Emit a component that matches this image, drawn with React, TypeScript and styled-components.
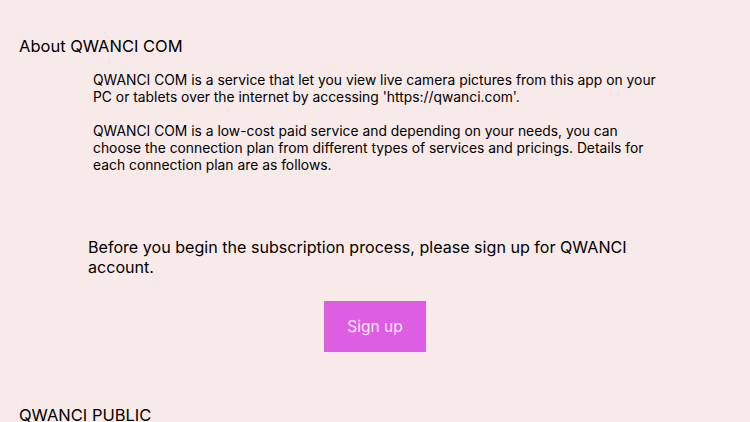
import styled, { createGlobalStyle } from "styled-components";

const GlobalStyle = createGlobalStyle`
  html, body {
    margin: 0;
    padding: 0;
    background: #f9eaea;
  }
  body {
    font-family: Inter, "Liberation Sans", sans-serif;
    color: #000;
  }
`;

function App() {
  return (
    <Page>
      <GlobalStyle />
      <SectionTitle>About QWANCI COM</SectionTitle>
      <Description>
        <Paragraph>
          QWANCI COM is a service that let you view live camera pictures from
          this app on your PC or tablets over the internet by accessing
          'https://qwanci.com'.
        </Paragraph>
        <Paragraph>
          QWANCI COM is a low-cost paid service and depending on your needs,
          you can choose the connection plan from different types of services
          and pricings. Details for each connection plan are as follows.
        </Paragraph>
      </Description>
      <Notice>
        Before you begin the subscription process, please sign up for QWANCI
        account.
      </Notice>
      <ButtonRow>
        <SignUpButton>Sign up</SignUpButton>
      </ButtonRow>
      <SectionTitle $spaced>QWANCI PUBLIC</SectionTitle>
    </Page>
  );
}

const Page = styled.div({
  height: 422,
  overflow: "hidden",
  display: "flex",
  flexDirection: "column",
  paddingTop: 35,
  boxSizing: "border-box",
});
const SectionTitle = styled.div<{ $spaced?: boolean }>((p) => ({
  paddingLeft: 19,
  marginTop: p.$spaced ? 52 : 0,
  fontSize: 16.5,
  lineHeight: "22px",
  color: "#000",
}));
const Description = styled.div({
  marginTop: 15,
  marginLeft: 93,
  width: 574,
  display: "flex",
  flexDirection: "column",
  gap: 17,
  fontSize: 13.85,
  lineHeight: "17px",
});
const Paragraph = styled.p({
  margin: 0,
});
const Notice = styled.div({
  marginTop: 63,
  marginLeft: 88,
  width: 580,
  fontSize: 16.1,
  lineHeight: "20px",
});
const ButtonRow = styled.div({
  marginTop: 24,
  display: "flex",
  justifyContent: "center",
});
const SignUpButton = styled.button({
  width: 102,
  height: 51,
  border: "none",
  background: "#dc5ee3",
  color: "#fbe7fb",
  fontFamily: "inherit",
  fontSize: 15.5,
  padding: 0,
});

export default App;
